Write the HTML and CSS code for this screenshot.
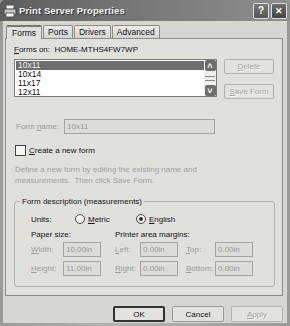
FILE: index.html
```html
<!DOCTYPE html>
<html lang="en">
  <head>
    <meta charset="UTF-8" />
    <title>Print Server Properties</title>
    <link rel="stylesheet" href="styles.css">
  </head>
  <body>
    <div class="window">
      <div class="titlebar">
        <svg class="app-icon" width="14" height="14" viewBox="0 0 14 14">
          <rect x="3" y="1" width="8" height="5" fill="#f4f4f4" stroke="#555" />
          <rect x="1" y="5" width="12" height="6" fill="#c8c8c8" stroke="#444" />
          <rect x="3" y="9" width="8" height="4" fill="#fff" stroke="#555" />
        </svg>
        <span class="title">Print Server Properties</span>
        <span class="tb-btn">?</span>
        <span class="tb-btn close">&#x2715;</span>
      </div>

      <div class="client">
        <div class="tabs">
          <div class="tab active">Forms</div>
          <div class="tab">Ports</div>
          <div class="tab">Drivers</div>
          <div class="tab">Advanced</div>
        </div>

        <div class="panel">
          <div class="forms-on"><u>F</u>orms on:&nbsp;&nbsp;HOME-MTHS4FW7WP</div>

          <div class="list-row">
            <div class="listbox">
              <ul class="items">
                <li class="selected">10x11</li>
                <li>10x14</li>
                <li>11x17</li>
                <li>12x11</li>
              </ul>
              <div class="scrollbar">
                <span class="arrow">&#x2C4;</span>
                <span class="thumb"></span>
                <span class="arrow">&#x2C5;</span>
              </div>
            </div>
            <div class="side-buttons">
              <button class="btn" disabled><u>D</u>elete</button>
              <button class="btn" disabled><u>S</u>ave Form</button>
            </div>
          </div>

          <div class="name-row">
            <span class="dim">Form <u>n</u>ame:</span>
            <span class="textbox wide">10x11</span>
          </div>

          <div class="check-row">
            <span class="checkbox"></span>
            <span><u>C</u>reate a new form</span>
          </div>

          <p class="desc">Define a new form by editing the existing name and measurements.&nbsp; Then click Save Form.</p>

          <div class="group">
            <div class="legend">Form description (measurements)</div>
            <div class="units-row">
              <span class="units-label">Units:</span>
              <span class="radio-opt"><span class="radio"></span><u>M</u>etric</span>
              <span class="radio-opt"><span class="radio on"></span><u>E</u>nglish</span>
            </div>
            <div class="heads">
              <span class="head-paper">Paper size:</span>
              <span>Printer area margins:</span>
            </div>
            <div class="meas-row">
              <span class="lbl dim"><u>W</u>idth:</span>
              <span class="textbox">10.00in</span>
              <span class="lbl2 dim"><u>L</u>eft:</span>
              <span class="textbox">0.00in</span>
              <span class="lbl3 dim"><u>T</u>op:</span>
              <span class="textbox">0.00in</span>
            </div>
            <div class="meas-row">
              <span class="lbl dim"><u>H</u>eight:</span>
              <span class="textbox">11.00in</span>
              <span class="lbl2 dim"><u>R</u>ight:</span>
              <span class="textbox">0.00in</span>
              <span class="lbl3 dim"><u>B</u>ottom:</span>
              <span class="textbox">0.00in</span>
            </div>
          </div>
        </div>

        <div class="footer">
          <button class="btn big default">OK</button>
          <button class="btn big">Cancel</button>
          <button class="btn big" disabled><u>A</u>pply</button>
        </div>
      </div>
    </div>
  </body>
</html>
```

FILE: styles.css
```css
body {
  margin: 0;
  padding: 0;
  background: #fff;
  font-family: "Liberation Sans", Arial, sans-serif;
  font-size: 8px;
  color: #111;
}

u {
  text-decoration: underline;
  text-underline-offset: 1px;
}

.window {
  width: 290px;
  height: 326px;
  box-sizing: border-box;
  background: linear-gradient(90deg, #9a9a98, #b4b4b2 40%, #9a9a98);
  display: flex;
  flex-direction: column;
}

.titlebar {
  height: 21px;
  display: flex;
  align-items: center;
  padding: 0 3px 0 3px;
  background: linear-gradient(90deg, #5c5c5c 0%, #747474 40%, #8e8e8e 100%);
  border-radius: 5px 5px 0 0;
}

.app-icon {
  margin-right: 2px;
}

.title {
  flex: 1;
  color: #f2f2f2;
  font-weight: bold;
  font-size: 9.5px;
  text-shadow: 1px 1px 0 #333;
  letter-spacing: 0.1px;
}

.tb-btn {
  width: 14px;
  height: 14px;
  margin-left: 2px;
  border: 1px solid #ddd;
  border-radius: 2px;
  background: linear-gradient(#7a7a7a, #555);
  color: #fff;
  font-weight: bold;
  font-size: 10px;
  display: flex;
  align-items: center;
  justify-content: center;
}

.tb-btn.close {
  background: linear-gradient(#6a6a6a, #444);
  font-size: 9px;
}

.client {
  flex: 1;
  margin: 0 3px 3px 3px;
  background: #d6d6d2;
  padding: 3px 4px 0 2px;
  display: flex;
  flex-direction: column;
}

.tabs {
  display: flex;
  align-items: flex-end;
  height: 14px;
  padding-left: 1px;
  position: relative;
  z-index: 1;
}

.tab {
  height: 12px;
  padding: 0 4px;
  border: 1px solid #8c8c8a;
  border-bottom: none;
  border-radius: 2px 2px 0 0;
  background: linear-gradient(#ececea, #d4d4d0);
  margin-right: 1px;
  display: flex;
  align-items: center;
  color: #111;
  font-size: 8.5px;
}

.tab.active {
  height: 14px;
  background: #e0e0dc;
  border-top: 2px solid #777;
  box-sizing: border-box;
  padding: 0 5px;
  margin-bottom: -1px;
}

.panel {
  height: 258px;
  box-sizing: border-box;
  border: 1px solid #8c8c8a;
  background: #e0e0dc;
  padding: 6px 8px 0 8px;
}

.forms-on {
  height: 10px;
  line-height: 10px;
  margin-bottom: 4px;
}

.list-row {
  display: flex;
  align-items: flex-start;
}

.listbox {
  width: 203px;
  height: 38px;
  box-sizing: border-box;
  border: 1px solid #7b7b7b;
  background: #fff;
  display: flex;
}

.items {
  flex: 1;
  list-style: none;
  margin: 0;
  padding: 1px 0 0 1px;
}

.items li {
  height: 9px;
  line-height: 9px;
  padding-left: 2px;
  font-size: 8.5px;
}

.items li.selected {
  background: #6e6e6e;
  color: #eee;
}

.scrollbar {
  width: 12px;
  display: flex;
  flex-direction: column;
  justify-content: space-between;
  align-items: center;
  background: #eeeeea;
}

.arrow {
  width: 11px;
  height: 11px;
  background: #6c6c6c;
  border-radius: 2px;
  color: #fff;
  font-size: 9px;
  font-weight: bold;
  line-height: 13px;
  text-align: center;
}

.thumb {
  width: 10px;
  height: 3px;
  border-top: 1px solid #888;
  border-bottom: 1px solid #888;
}

.side-buttons {
  margin-left: 7px;
  display: flex;
  flex-direction: column;
  gap: 10px;
}

.btn {
  font-family: "Liberation Sans", Arial, sans-serif;
  font-size: 8px;
  width: 50px;
  height: 15px;
  padding: 0;
  border: 1px solid #9a9a98;
  border-radius: 2px;
  background: #e2e2de;
  color: #111;
}

.btn:disabled {
  color: #a4a4a2;
  text-shadow: 1px 1px 0 #fafafa;
  border-color: #b2b2b0;
}

.name-row {
  margin-top: 20px;
  display: flex;
  align-items: center;
  height: 15px;
}

.dim {
  color: #9a9a98;
}

.name-row .dim {
  width: 48px;
  padding-left: 2px;
}

.textbox {
  display: inline-block;
  box-sizing: border-box;
  height: 15px;
  width: 38px;
  line-height: 13px;
  padding-left: 2px;
  border: 1px solid #a4a4a2;
  background: #dcdcd8;
  color: #9a9a98;
}

.textbox.wide {
  width: 151px;
}

.check-row {
  margin-top: 10px;
  display: flex;
  align-items: center;
  height: 13px;
}

.checkbox {
  width: 11px;
  height: 11px;
  box-sizing: border-box;
  border: 1px solid #444;
  background: #f4f4f2;
  margin: 0 3px 0 1px;
}

.desc {
  margin: 7px 0 0 1px;
  width: 230px;
  line-height: 11px;
  color: #a0a09e;
}

.group {
  margin-top: 15px;
  width: 261px;
  height: 86px;
  box-sizing: border-box;
  border: 1px solid #b0b0ae;
  border-radius: 3px;
  padding: 0 0 0 16px;
}

.legend {
  margin: -6px 0 0 -11px;
  padding: 0 2px;
  background: #e0e0dc;
  width: max-content;
  height: 11px;
  line-height: 11px;
}

.units-row {
  margin-top: 6px;
  display: flex;
  align-items: center;
  height: 12px;
}

.units-label {
  width: 44px;
}

.radio-opt {
  display: flex;
  align-items: center;
  width: 61px;
}

.radio {
  width: 10px;
  height: 10px;
  box-sizing: border-box;
  border: 1px solid #444;
  border-radius: 50%;
  background: #f4f4f2;
  margin-right: 3px;
  position: relative;
}

.radio.on::after {
  content: "";
  position: absolute;
  left: 2px;
  top: 2px;
  width: 4px;
  height: 4px;
  border-radius: 50%;
  background: #333;
}

.heads {
  margin-top: 5px;
  display: flex;
  height: 10px;
  line-height: 10px;
}

.head-paper {
  width: 84px;
}

.meas-row {
  display: flex;
  align-items: center;
  margin-top: 2px;
  height: 15px;
}

.meas-row + .meas-row {
  margin-top: 4px;
}

.lbl {
  width: 32px;
}

.lbl2 {
  width: 25px;
  margin-left: 14px;
}

.lbl3 {
  width: 29px;
  margin-left: 8px;
}

.footer {
  flex: 1;
  display: flex;
  justify-content: flex-end;
  align-items: flex-start;
  gap: 7px;
  padding-top: 10px;
}

.btn.big {
  width: 52px;
  height: 16px;
}

.btn.default {
  border: 2px solid #333;
}
```
